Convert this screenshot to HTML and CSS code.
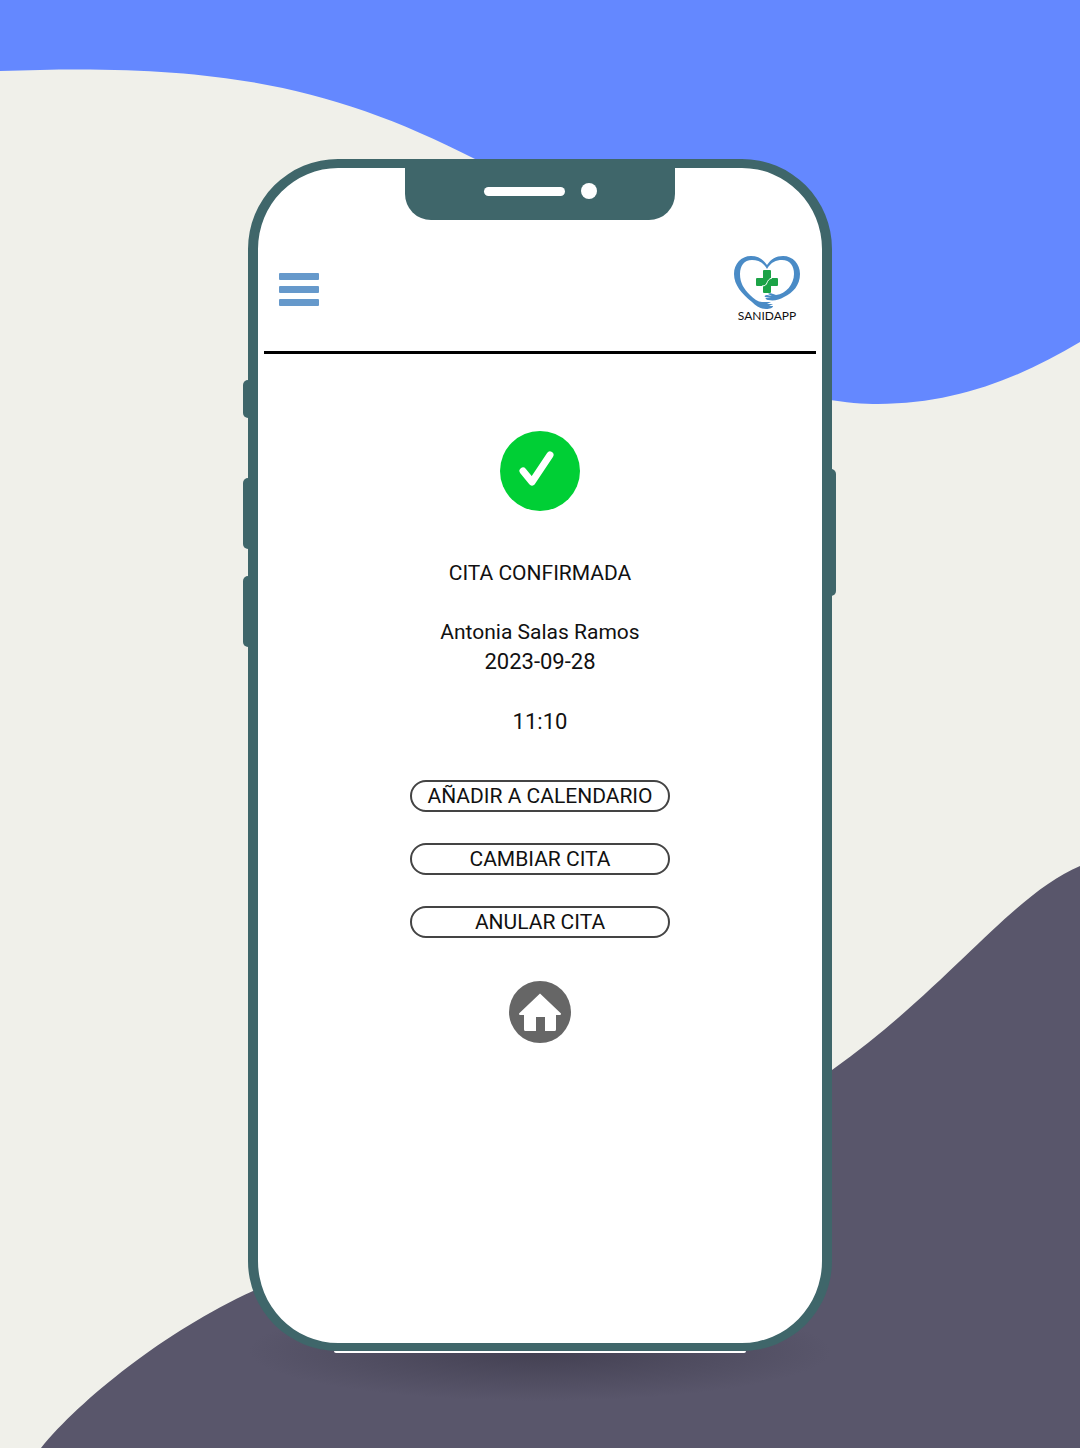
FILE: index.html
```html
<!DOCTYPE html>
<html lang="es">
<head>
<meta charset="utf-8">
<meta name="viewport" content="width=device-width, initial-scale=1">
<title>Sanidapp - Cita confirmada</title>
<link rel="stylesheet" href="styles.css">
</head>
<body>
<svg class="backdrop" viewBox="0 0 1080 1448" preserveAspectRatio="none" aria-hidden="true">
  <path fill="#6488ff" d="M0 0H1080V342C1020 378 955 404 878 404C850 404 800 398 760 380C660 330 600 215 475 159C330 85 215 63 0 71Z"/>
  <path fill="#59566b" d="M41 1448C80 1400 165 1331 253 1291C440 1210 650 1200 832 1070C950 986 1010 896 1080 866V1448Z"/>
</svg>
<div class="phone">
  <span class="side-key key-mute"></span>
  <span class="side-key key-up"></span>
  <span class="side-key key-down"></span>
  <span class="side-key key-power"></span>
  <div class="screen">
    <div class="notch"><span class="speaker"></span><span class="camera"></span></div>
    <header class="topbar">
      <button class="menu" type="button" aria-label="Menú"><span></span><span></span><span></span></button>
      <a class="logo" href="#">
        <svg viewBox="0 0 66 54" aria-hidden="true">
          <path fill="#4a8bc6" d="M33 9C29 3 24 0 17 0C7 0 0 8 0 18C0 29 8 38 18 46C22 50 26 53 32 53C36 53 39 52 39 50L35 50L39 48L33 48L37 46L28 46C24 46 20 43 16 39C10 33 6 27 6 18C6 10 10 4 18 4C24 4 29 6 33 13Z"/>
          <path fill="#4a8bc6" d="M33 9C37 3 42 0 49 0C59 0 66 8 66 18C66 29 59 37 50 41C45 44 40 45 34 44C31 43 31 42 33 42L37 42L31 41C30 40 31 39 33 39L38 40L34 38C35 37 37 37 42 39C52 38 60 28 60 18C60 10 56 4 48 4C42 4 37 6 33 13Z"/>
          <path fill="#1ca347" d="M30 14H36Q37 14 37 15V22H43Q44 22 44 23V29Q44 30 43 30H37V36Q37 37 36 37H30Q29 37 29 36V30H23Q22 30 22 29V23Q22 22 23 22H29V15Q29 14 30 14Z"/>
          <path fill="none" stroke="#fff" d="M28 30C35 30 31 24 38 22"/>
        </svg>
        <span>SANIDAPP</span>
      </a>
    </header>
    <main class="content">
      <svg class="check" viewBox="0 0 80 80" role="img" aria-label="Confirmada">
        <circle cx="40" cy="40" r="40" fill="#00cf35"/>
        <path d="M23 40L32 51L50 24" fill="none" stroke="#fff" stroke-width="7" stroke-linecap="round" stroke-linejoin="round"/>
      </svg>
      <div class="details">
        <h1>CITA CONFIRMADA</h1>
        <p>Antonia Salas Ramos<br><time>2023-09-28</time></p>
        <p><time>11:10</time></p>
      </div>
      <div class="actions">
        <button type="button">AÑADIR A CALENDARIO</button>
        <button type="button">CAMBIAR CITA</button>
        <button type="button">ANULAR CITA</button>
      </div>
      <a class="home" href="#" aria-label="Inicio">
        <svg viewBox="0 0 62 62" aria-hidden="true">
          <circle cx="31" cy="31" r="31" fill="#666"/>
          <path fill="#fff" d="M31 12.500L52 32.500Q52 34 51 34H47V48.500Q47 50 45.500 50H36V36H27V50H16.500Q15 50 15 48.500V34H11Q10 34 10 32.500Z"/>
        </svg>
      </a>
    </main>
  </div>
</div>
</body>
</html>
```
FILE: styles.css
```css
* {
  box-sizing: border-box;
}

body {
  position: relative;
  min-height: 100vh;
  margin: 0;
  padding: 159px 16px 96px;
  background: #f0f0ea;
  color: #111;
  font-family: Roboto, "Liberation Sans", sans-serif;
  font-size: 21px;
  line-height: 29px;
}

.backdrop {
  position: absolute;
  inset: 0;
  width: 100%;
  height: 100%;
}

.phone {
  position: relative;
  max-width: 584px;
  margin: 0 auto;
}

/* soft shadow on the ground under the phone */
.phone::before {
  content: "";
  position: absolute;
  left: 0;
  right: 0;
  bottom: -50px;
  height: 100px;
  background: radial-gradient(closest-side, #434052, #43405200);
}

/* light edge along the base */
.phone::after {
  content: "";
  position: absolute;
  left: 86px;
  right: 86px;
  bottom: -2px;
  height: 2px;
  border-radius: 0 0 12px 12px;
  background: #fff;
}

.screen {
  position: relative;
  border: solid #3f666a;
  border-width: 9px 10px 8px;
  border-radius: 90px;
  background: #fff;
}

.side-key {
  position: absolute;
  left: -5px;
  width: 12px;
  border-radius: 5px;
  background: #3f666a;
}

.key-mute {
  top: 221px;
  height: 38px;
}

.key-up {
  top: 319px;
  height: 71px;
}

.key-down {
  top: 417px;
  height: 71px;
}

.key-power {
  top: 310px;
  right: -4px;
  left: auto;
  height: 127px;
}

.notch {
  display: flex;
  align-items: center;
  justify-content: center;
  gap: 16px;
  width: 48%;
  height: 52px;
  margin: 0 auto;
  padding-bottom: 6px;
  border-radius: 0 0 26px 26px;
  background: #3f666a;
}

.speaker {
  width: 81px;
  height: 9px;
  border-radius: 5px;
  background: #fff;
}

.camera {
  width: 16px;
  height: 16px;
  border-radius: 50%;
  background: #fff;
}

.topbar {
  display: flex;
  align-items: center;
  justify-content: space-between;
  margin: 0 6px;
  padding: 36px 16px 29px 15px;
  border-bottom: 3px solid #000;
}

.menu {
  display: flex;
  flex-direction: column;
  gap: 6px;
  width: 40px;
  padding: 0;
  border: 0;
  background: none;
}

.menu span {
  width: 100%;
  height: 7px;
  border-radius: 1px;
  background: #6699cb;
}

.logo {
  display: flex;
  flex-direction: column;
  align-items: center;
  width: 66px;
  color: #111;
  font: 12px/12px Lato, sans-serif;
  text-decoration: none;
}

.logo svg {
  width: 100%;
}

.content {
  display: flex;
  flex-direction: column;
  align-items: center;
  padding: 77px 16px 300px;
}

.check {
  width: 80px;
}

.details {
  display: grid;
  gap: 30px;
  margin: 48px 0 43px;
  text-align: center;
}

.details h1,
.details p {
  margin: 0;
  font-size: inherit;
  font-weight: 400;
}

.details time {
  font-size: 22px;
}

.actions {
  display: grid;
  gap: 31px;
  width: 260px;
}

.actions button {
  height: 32px;
  padding: 0;
  border: 2px solid #444;
  border-radius: 16px;
  background: #fff;
  color: #111;
  font: inherit;
}

.home {
  width: 62px;
  margin-top: 43px;
}

.home svg,
.check,
.logo svg {
  display: block;
}
```
